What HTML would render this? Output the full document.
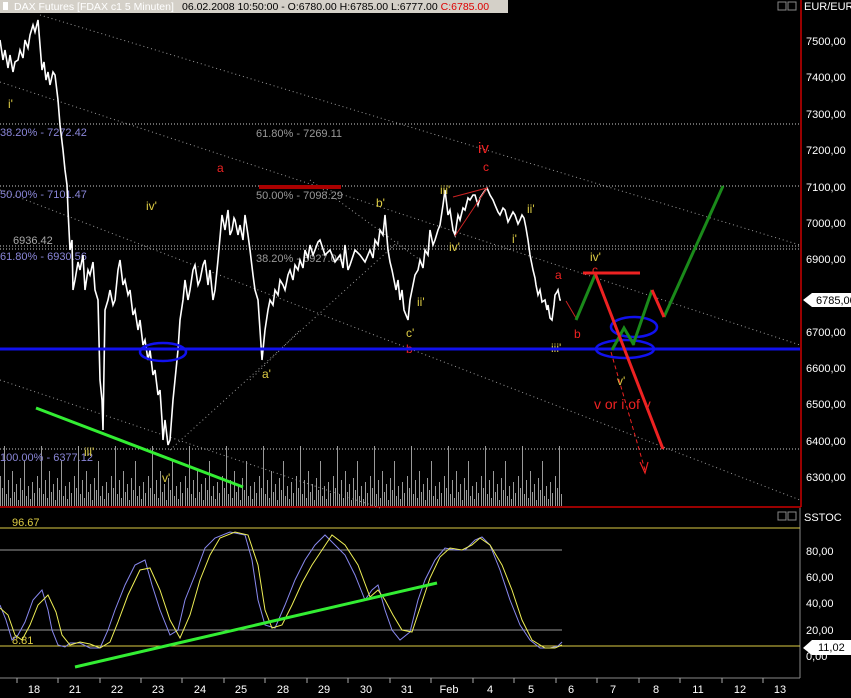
<!DOCTYPE html>
<html><head><meta charset="utf-8"><style>
html,body{margin:0;padding:0;background:#000;width:851px;height:698px;overflow:hidden}
svg{display:block;font-family:"Liberation Sans",sans-serif}
</style></head><body>
<svg width="851" height="698" viewBox="0 0 851 698" xmlns="http://www.w3.org/2000/svg">
<defs>
<pattern id="vol" x="0" y="416" width="37" height="90" patternUnits="userSpaceOnUse">
<g stroke="#999" stroke-width="1">
<line x1="0.5" y1="90" x2="0.5" y2="60"/><line x1="2.5" y1="90" x2="2.5" y2="72"/><line x1="4.5" y1="90" x2="4.5" y2="30"/>
<line x1="6.5" y1="90" x2="6.5" y2="78"/><line x1="8.5" y1="90" x2="8.5" y2="64"/><line x1="10.5" y1="90" x2="10.5" y2="82"/>
<line x1="12.5" y1="90" x2="12.5" y2="55"/><line x1="14.5" y1="90" x2="14.5" y2="76"/><line x1="16.5" y1="90" x2="16.5" y2="68"/>
<line x1="18.5" y1="90" x2="18.5" y2="84"/><line x1="20.5" y1="90" x2="20.5" y2="62"/><line x1="22.5" y1="90" x2="22.5" y2="74"/>
<line x1="24.5" y1="90" x2="24.5" y2="45"/><line x1="26.5" y1="90" x2="26.5" y2="80"/><line x1="28.5" y1="90" x2="28.5" y2="70"/>
<line x1="30.5" y1="90" x2="30.5" y2="83"/><line x1="32.5" y1="90" x2="32.5" y2="66"/><line x1="34.5" y1="90" x2="34.5" y2="77"/>
</g></pattern>
</defs>
<rect x="0" y="0" width="508" height="13" fill="#d4d0c8"/>
<rect x="3" y="2" width="5" height="8" fill="#fff"/>
<text x="14" y="10" font-size="10.5" fill="#fff">DAX Futures [FDAX c1  5 Minuten]</text>
<text x="182" y="10" font-size="10.5" fill="#000">06.02.2008 10:50:00 - O:6780.00 H:6785.00 L:6777.00 <tspan fill="#d00">C:6785.00</tspan></text>
<rect x="778" y="2" width="8" height="8" fill="none" stroke="#888"/><rect x="788" y="2" width="8" height="8" fill="none" stroke="#888"/>
<line x1="801" y1="0" x2="801" y2="507" stroke="#c00" stroke-width="1.5"/>
<line x1="0" y1="507" x2="801" y2="507" stroke="#c00" stroke-width="1.5"/>
<line x1="0" y1="678" x2="800" y2="678" stroke="#888"/>
<line x1="800" y1="508" x2="800" y2="678" stroke="#888"/>
<g fill="#fff" font-size="11">
<text x="804" y="10">EUR/EUR</text>
<text x="806" y="45">7500,00</text><text x="806" y="81">7400,00</text><text x="806" y="118">7300,00</text>
<text x="806" y="154">7200,00</text><text x="806" y="191">7100,00</text><text x="806" y="227">7000,00</text>
<text x="806" y="263">6900,00</text><text x="806" y="336">6700,00</text><text x="806" y="372">6600,00</text>
<text x="806" y="408">6500,00</text><text x="806" y="445">6400,00</text><text x="806" y="481">6300,00</text>
<text x="804" y="521">SSTOC</text>
<text x="806" y="555">80,00</text><text x="806" y="581">60,00</text><text x="806" y="607">40,00</text>
<text x="806" y="634">20,00</text><text x="806" y="660">0,00</text>
</g>
<path d="M803 300 L812 293 L851 293 L851 307 L812 307 Z" fill="#fff"/>
<text x="816" y="304" font-size="11" fill="#000">6785,00</text>
<path d="M803 648 L812 640 L851 640 L851 655 L812 655 Z" fill="#fff"/>
<text x="818" y="651" font-size="11" fill="#000">11,02</text>
<rect x="0" y="416" width="562" height="90" fill="url(#vol)"/>
<g stroke="#ccc" stroke-dasharray="1,2">
<line x1="0" y1="124" x2="800" y2="124"/><line x1="0" y1="186" x2="800" y2="186"/>
<line x1="0" y1="246" x2="800" y2="246"/><line x1="0" y1="249" x2="800" y2="249"/>
<line x1="0" y1="449" x2="800" y2="449"/>
</g>
<g stroke="#999" stroke-dasharray="1,3">
<line x1="40" y1="15" x2="800" y2="245"/><line x1="0" y1="82" x2="800" y2="345"/>
<line x1="0" y1="190" x2="800" y2="500"/><line x1="0" y1="380" x2="380" y2="508"/>
<line x1="170" y1="450" x2="400" y2="240"/><line x1="250" y1="380" x2="300" y2="330"/>
<line x1="310" y1="180" x2="420" y2="260"/>
</g>
<g font-size="11">
<text x="0" y="136" fill="#8a86d8">38.20% - 7272.42</text>
<text x="0" y="198" fill="#8a86d8">50.00% - 7101.47</text>
<text x="0" y="260" fill="#8a86d8">61.80% - 6930.56</text>
<text x="0" y="461" fill="#8a86d8">100.00% - 6377.12</text>
<text x="13" y="244" fill="#aaa">6936.42</text>
<text x="256" y="137" fill="#999">61.80% - 7269.11</text>
<text x="256" y="199" fill="#999">50.00% - 7098.29</text>
<text x="256" y="262" fill="#999">38.20% - 6927.04</text>
</g>
<line x1="259" y1="187" x2="341" y2="187" stroke="#a00" stroke-width="4"/>
<polyline fill="none" stroke="#fff" stroke-width="1.6" points="0,40 3,60 5,50 8,68 10,55 13,72 15,62 18,60 20,50 23,58 25,40 28,48 30,35 33,25 35,32 38,20 40,45 42,70 44,62 46,80 48,72 50,85 53,72 55,75 58,100 60,125 63,150 65,170 67,185 68,210 70,250 72,240 73,290 75,280 78,262 80,270 83,255 85,290 88,270 90,275 93,262 95,290 98,300 100,380 102,400 103,430 105,310 108,300 110,290 113,305 115,300 118,270 120,260 123,285 125,280 128,295 130,290 133,315 135,310 138,330 140,320 143,345 145,340 148,360 150,350 153,375 155,370 158,395 160,390 162,420 163,440 165,420 168,445 170,440 173,400 175,380 178,350 180,320 183,300 185,280 188,300 190,290 193,270 195,265 198,285 200,280 203,265 205,260 208,285 210,270 213,300 215,290 218,260 222,215 225,230 228,210 230,235 232,230 234,218 235,220 238,235 240,225 243,240 245,215 248,235 250,250 253,275 255,290 258,300 260,330 262,360 265,330 268,310 270,300 273,305 275,290 278,295 280,280 283,285 285,290 288,275 290,270 293,280 295,265 298,270 300,260 303,268 305,250 308,258 310,245 313,255 315,250 318,242 320,240 325,255 330,250 335,262 340,255 343,268 345,245 348,270 350,265 355,250 360,255 365,262 370,250 373,258 375,240 378,245 380,230 383,235 385,215 388,250 390,262 392,270 396,290 398,280 400,300 402,290 404,310 408,320 410,300 412,290 415,275 418,270 420,260 423,268 425,250 428,255 430,230 433,245 435,240 438,230 440,225 443,205 445,190 448,215 450,210 453,230 455,235 458,215 460,220 463,208 465,210 468,198 470,200 473,195 475,195 478,205 480,198 484,192 487,188 490,195 493,200 495,205 498,212 500,215 503,208 505,210 508,222 510,218 513,212 515,215 518,224 520,220 522,215 524,218 526,228 528,240 530,255 533,270 535,278 536,285 538,295 540,290 542,302 545,300 547,310 548,305 550,318 552,320 554,305 555,295 557,292 558,290 560,300 561,300"/>
<polyline fill="none" stroke="#c22" stroke-width="1" points="453,197 487,188 455,236"/>
<g font-size="12">
<text x="8" y="108" fill="#dc4">i'</text><text x="146" y="210" fill="#dc4">iv'</text>
<text x="376" y="207" fill="#dc4">b'</text><text x="440" y="194" fill="#dc4">iii'</text>
<text x="449" y="251" fill="#dc4">iv'</text><text x="527" y="213" fill="#dc4">ii'</text>
<text x="512" y="243" fill="#dc4">i'</text><text x="417" y="306" fill="#dc4">ii'</text>
<text x="406" y="337" fill="#dc4">c'</text><text x="262" y="378" fill="#dc4">a'</text>
<text x="84" y="456" fill="#dc4">iii'</text><text x="162" y="482" fill="#dc4">v'</text>
<text x="551" y="352" fill="#dc4">iii'</text><text x="590" y="261" fill="#dc4">iv'</text>
<text x="617" y="385" fill="#dc4">v'</text>
<text x="217" y="172" fill="#e22">a</text><text x="406" y="353" fill="#e22">b</text>
<text x="555" y="279" fill="#e22">a</text><text x="574" y="338" fill="#e22">b</text>
<text x="592" y="274" fill="#e22">c</text>
<text x="483" y="171" fill="#e22">c</text>
<text x="478" y="153" fill="#e22" font-size="15">iv</text>
<text x="594" y="409" fill="#e22" font-size="14">v or i of v</text>
</g>
<line x1="0" y1="349" x2="800" y2="349" stroke="#11e" stroke-width="3"/>
<g fill="none" stroke="#11e" stroke-width="2.5">
<ellipse cx="163" cy="352" rx="23" ry="9"/><ellipse cx="634" cy="327" rx="23" ry="10"/><ellipse cx="625" cy="349" rx="29" ry="9"/>
</g>
<line x1="566" y1="301" x2="576" y2="318" stroke="#c22" stroke-width="1"/>
<polyline fill="none" stroke="#1a8a1a" stroke-width="3" points="576,320 595,275"/>
<polyline fill="none" stroke="#1a8a1a" stroke-width="3" points="612,350 624,328 634,345"/>
<polyline fill="none" stroke="#1a8a1a" stroke-width="3" points="633,345 652,290"/>
<polyline fill="none" stroke="#1a8a1a" stroke-width="3" points="664,317 723,186"/>
<line x1="652" y1="290" x2="664" y2="317" stroke="#e22" stroke-width="3"/>
<line x1="583" y1="273" x2="640" y2="273" stroke="#e22" stroke-width="3"/>
<line x1="595" y1="273" x2="663" y2="449" stroke="#e22" stroke-width="3"/>
<line x1="611" y1="352" x2="645" y2="470" stroke="#e22" stroke-width="1" stroke-dasharray="4,3"/>
<path d="M640 462 L645 473 L648 462" fill="none" stroke="#e22" stroke-width="1.2"/>
<line x1="36" y1="408" x2="243" y2="487" stroke="#3e3" stroke-width="3"/>
<rect x="778" y="512" width="8" height="8" fill="none" stroke="#888"/><rect x="788" y="512" width="8" height="8" fill="none" stroke="#888"/>
<line x1="0" y1="528" x2="800" y2="528" stroke="#dc4" stroke-width="1"/>
<line x1="0" y1="646" x2="800" y2="646" stroke="#dc4" stroke-width="1"/>
<line x1="0" y1="550" x2="562" y2="550" stroke="#999"/>
<line x1="0" y1="630" x2="562" y2="630" stroke="#999"/>
<text x="12" y="526" font-size="11" fill="#dc4">96.67</text>
<text x="12" y="644" font-size="11" fill="#dc4">8.81</text>
<polyline fill="none" stroke="#88e" stroke-width="1" points="0,605 6,620 12,640 18,635 25,622 33,600 42,590 48,610 52,630 58,645 65,647 70,643 80,643 90,648 100,648 108,630 115,610 125,585 135,565 145,560 152,585 160,610 170,635 178,630 185,600 195,575 205,548 215,538 230,532 245,535 252,560 258,600 265,625 275,628 285,605 295,580 305,560 315,545 325,535 335,545 345,555 355,575 365,600 372,590 378,585 385,610 392,630 400,640 410,632 418,600 425,580 435,560 445,548 455,550 465,550 475,540 482,537 490,545 500,570 510,600 520,625 530,640 540,648 550,648 558,646 562,642"/>
<polyline fill="none" stroke="#ee5" stroke-width="1" points="0,608 8,615 15,635 22,640 30,625 38,605 48,595 56,612 62,635 70,645 80,642 90,644 100,648 110,642 118,622 128,595 140,570 150,568 160,590 170,620 180,638 190,615 200,580 210,555 220,538 235,532 248,535 258,565 265,610 272,628 282,625 292,605 302,583 312,565 322,550 332,535 345,545 358,565 370,597 378,590 385,600 393,615 402,630 412,632 420,608 430,578 440,557 450,548 462,550 472,545 480,538 490,545 502,565 512,590 522,620 532,640 545,648 555,648 562,645"/>
<line x1="75" y1="667" x2="437" y2="583" stroke="#3e3" stroke-width="3"/>
<g stroke="#aaa"><line x1="17" y1="678" x2="17" y2="683"/><line x1="58" y1="678" x2="58" y2="683"/><line x1="100" y1="678" x2="100" y2="683"/><line x1="141" y1="678" x2="141" y2="683"/><line x1="182" y1="678" x2="182" y2="683"/><line x1="224" y1="678" x2="224" y2="683"/><line x1="265" y1="678" x2="265" y2="683"/><line x1="307" y1="678" x2="307" y2="683"/><line x1="348" y1="678" x2="348" y2="683"/><line x1="390" y1="678" x2="390" y2="683"/><line x1="431" y1="678" x2="431" y2="683"/><line x1="473" y1="678" x2="473" y2="683"/><line x1="514" y1="678" x2="514" y2="683"/><line x1="556" y1="678" x2="556" y2="683"/><line x1="597" y1="678" x2="597" y2="683"/><line x1="639" y1="678" x2="639" y2="683"/><line x1="680" y1="678" x2="680" y2="683"/><line x1="722" y1="678" x2="722" y2="683"/><line x1="763" y1="678" x2="763" y2="683"/></g>
<g fill="#fff" font-size="11" text-anchor="middle">
<text x="34" y="693">18</text><text x="75" y="693">21</text><text x="117" y="693">22</text><text x="158" y="693">23</text>
<text x="200" y="693">24</text><text x="241" y="693">25</text><text x="283" y="693">28</text><text x="324" y="693">29</text>
<text x="366" y="693">30</text><text x="407" y="693">31</text><text x="449" y="693">Feb</text><text x="490" y="693">4</text>
<text x="531" y="693">5</text><text x="571" y="693">6</text><text x="613" y="693">7</text><text x="656" y="693">8</text>
<text x="698" y="693">11</text><text x="740" y="693">12</text><text x="780" y="693">13</text>
</g>
</svg>
</body></html>
